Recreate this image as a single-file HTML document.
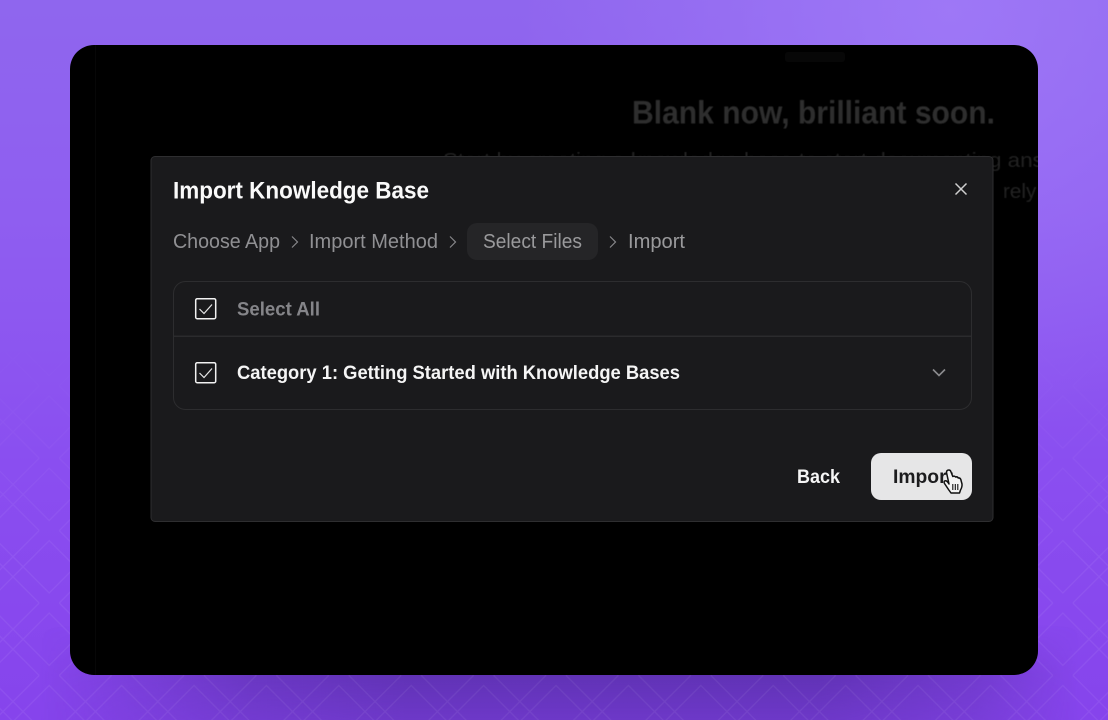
<!DOCTYPE html>
<html><head><meta charset="utf-8"><style>
html,body{margin:0;padding:0;width:1108px;height:720px;overflow:hidden;background:#8a50ee}
svg{display:block;filter:blur(.3px)}
text{font-family:"Liberation Sans",sans-serif}
</style></head><body>
<svg width="1108" height="720" viewBox="0 0 1108 720" xmlns="http://www.w3.org/2000/svg">
<defs>
<linearGradient id="bg" x1="0" y1="0" x2="0" y2="1">
<stop offset="0" stop-color="#8f66ee"/><stop offset=".3" stop-color="#8f5ef0"/><stop offset=".65" stop-color="#8a4ef0"/><stop offset="1" stop-color="#8644ec"/>
</linearGradient>
<linearGradient id="dark" gradientUnits="userSpaceOnUse" x1="40" y1="0" x2="1080" y2="0">
<stop offset="0" stop-color="#4f2a9c" stop-opacity="0"/><stop offset=".2" stop-color="#4f2a9c" stop-opacity=".55"/><stop offset=".35" stop-color="#4f2a9c" stop-opacity=".72"/><stop offset=".75" stop-color="#4f2a9c" stop-opacity=".72"/><stop offset=".9" stop-color="#4f2a9c" stop-opacity=".4"/><stop offset="1" stop-color="#4f2a9c" stop-opacity="0"/>
</linearGradient>
<linearGradient id="darkfade" gradientUnits="userSpaceOnUse" x1="0" y1="625" x2="0" y2="720">
<stop offset="0" stop-color="#fff" stop-opacity="0"/><stop offset=".52" stop-color="#fff" stop-opacity=".95"/><stop offset="1" stop-color="#fff" stop-opacity=".62"/>
</linearGradient>
<mask id="dm" maskUnits="userSpaceOnUse" x="0" y="0" width="1108" height="720"><rect y="625" width="1108" height="95" fill="url(#darkfade)"/></mask>
<radialGradient id="light" gradientUnits="userSpaceOnUse" cx="950" cy="10" r="430">
<stop offset="0" stop-color="#a47ffa" stop-opacity=".7"/><stop offset="1" stop-color="#a47ffa" stop-opacity="0"/>
</radialGradient>
<pattern id="dia" patternUnits="userSpaceOnUse" width="72" height="72" patternTransform="translate(13 603) scale(1.0056)">
<g fill="none" stroke="#fff" stroke-width="1.3">
<path d="M-26 0L36 62L98 0M-26 72L36 10L98 72"/>
<path d="M-98 0L-36 62L26 0M-98 72L-36 10L26 72"/>
<path d="M46 0L108 62L170 0M46 72L108 10L170 72"/>
</g>
</pattern>
<linearGradient id="fade" gradientUnits="userSpaceOnUse" x1="0" y1="330" x2="0" y2="560">
<stop offset="0" stop-color="#fff" stop-opacity="0"/><stop offset="1" stop-color="#fff" stop-opacity="1"/>
</linearGradient>
<mask id="m" maskUnits="userSpaceOnUse" x="0" y="0" width="1108" height="720"><rect width="1108" height="720" fill="url(#fade)"/></mask>
<clipPath id="card"><rect x="70" y="45" width="968" height="630" rx="24"/></clipPath>
<filter id="b1" x="-10%" y="-50%" width="120%" height="200%"><feGaussianBlur stdDeviation=".6"/></filter>
</defs>

<rect width="1108" height="720" fill="url(#bg)"/>
<rect width="1108" height="720" fill="url(#light)"/>
<rect width="1108" height="720" fill="url(#dark)" mask="url(#dm)"/>
<rect width="1108" height="720" fill="url(#dia)" mask="url(#m)" opacity=".06"/>

<rect x="70" y="45" width="968" height="630" rx="24" fill="#000"/>
<g clip-path="url(#card)">
<rect x="95" y="45" width="1" height="630" fill="#070707"/>
<rect x="785" y="52" width="60" height="10" rx="3" fill="#070707"/>
<g filter="url(#b1)">
<text x="632" y="123.500" font-size="32" font-weight="700" fill="#2e2e2e" textLength="363" lengthAdjust="spacingAndGlyphs">Blank now, brilliant soon.</text>
<text x="443" y="167" font-size="20" fill="#232323" textLength="648" lengthAdjust="spacingAndGlyphs">Start by creating a knowledge base to start documenting answers</text>
<text x="1003" y="198" font-size="20" fill="#232323" textLength="62" lengthAdjust="spacingAndGlyphs">rely on</text>
</g>
</g>

<rect x="151" y="156.500" width="842" height="365" rx="4" fill="#1a1a1c" stroke="#2e2e30"/>

<text x="173" y="198.500" font-size="24.300" font-weight="700" fill="#fafafa" textLength="256" lengthAdjust="spacingAndGlyphs">Import Knowledge Base</text>
<path d="M955.500 183.500L966.500 194.500M966.500 183.500L955.500 194.500" fill="none" stroke="#cfcfcf" stroke-width="1.500"/>

<text x="173" y="248" font-size="20" fill="#909093" textLength="107" lengthAdjust="spacingAndGlyphs">Choose App</text>
<path d="M292 236.500L297.500 242L292 247.500" fill="none" stroke="#88888b" stroke-width="1.200"/>
<text x="309" y="248" font-size="20" fill="#909093" textLength="129" lengthAdjust="spacingAndGlyphs">Import Method</text>
<path d="M450 236.500L455.500 242L450 247.500" fill="none" stroke="#88888b" stroke-width="1.200"/>
<rect x="467" y="223" width="131" height="37" rx="10" fill="#252527"/>
<text x="483" y="248" font-size="20" fill="#9a9a9c" textLength="99" lengthAdjust="spacingAndGlyphs">Select Files</text>
<path d="M610 236.500L615.500 242L610 247.500" fill="none" stroke="#88888b" stroke-width="1.200"/>
<text x="628" y="248" font-size="20" fill="#9a9a9c" textLength="57" lengthAdjust="spacingAndGlyphs">Import</text>

<rect x="173.500" y="281.500" width="798" height="128" rx="12" fill="none" stroke="#2d2d2f"/>
<rect x="174" y="335.500" width="797" height="1.500" fill="#2b2b2d"/>

<rect x="195.700" y="298.700" width="20" height="20" rx="1.500" fill="none" stroke="#f2f2f2" stroke-width="1.500"/>
<path d="M199.500 309L204 313.500L212 304.500" fill="none" stroke="#e8e8e8" stroke-width="1.200"/>
<text x="237" y="315.500" font-size="19" font-weight="700" fill="#858589" textLength="83" lengthAdjust="spacingAndGlyphs">Select All</text>

<rect x="195.700" y="362.700" width="20" height="20" rx="1.500" fill="none" stroke="#f2f2f2" stroke-width="1.500"/>
<path d="M199.500 373L204 377.500L212 368.500" fill="none" stroke="#e8e8e8" stroke-width="1.200"/>
<text x="237" y="379" font-size="19" font-weight="700" fill="#f5f5f5" textLength="443" lengthAdjust="spacingAndGlyphs">Category 1: Getting Started with Knowledge Bases</text>
<path d="M933 369.500L939 375.500L945 369.500" fill="none" stroke="#8b8b8e" stroke-width="1.600"/>

<text x="797" y="483" font-size="19.500" font-weight="700" fill="#f5f5f5" textLength="43" lengthAdjust="spacingAndGlyphs">Back</text>
<rect x="871" y="453" width="101" height="47" rx="10" fill="#e6e6e7"/>
<text x="893" y="483" font-size="19.500" font-weight="700" fill="#1c1c1e" textLength="60" lengthAdjust="spacingAndGlyphs">Import</text>

<path d="M946.500 472.500Q946.500 470 948.800 470Q950.500 470 951 472L952.800 476.500Q954.500 475.500 955.500 477Q957.300 476.300 958.200 478Q960 477.600 960.800 479.500L962 484Q962.300 487 960.500 490L959.500 493L951 493L948.500 489.500L944.500 483.500Q943.500 481.500 945 480.800Q946.500 480.300 948 482.500L949 484Z" fill="#f4f4f4" stroke="#111" stroke-width="1.500" stroke-linejoin="round"/>
<path d="M952.800 484V490M955.300 484V490M957.800 484V490" fill="none" stroke="#111" stroke-width="1.100"/>
</svg>
</body></html>
